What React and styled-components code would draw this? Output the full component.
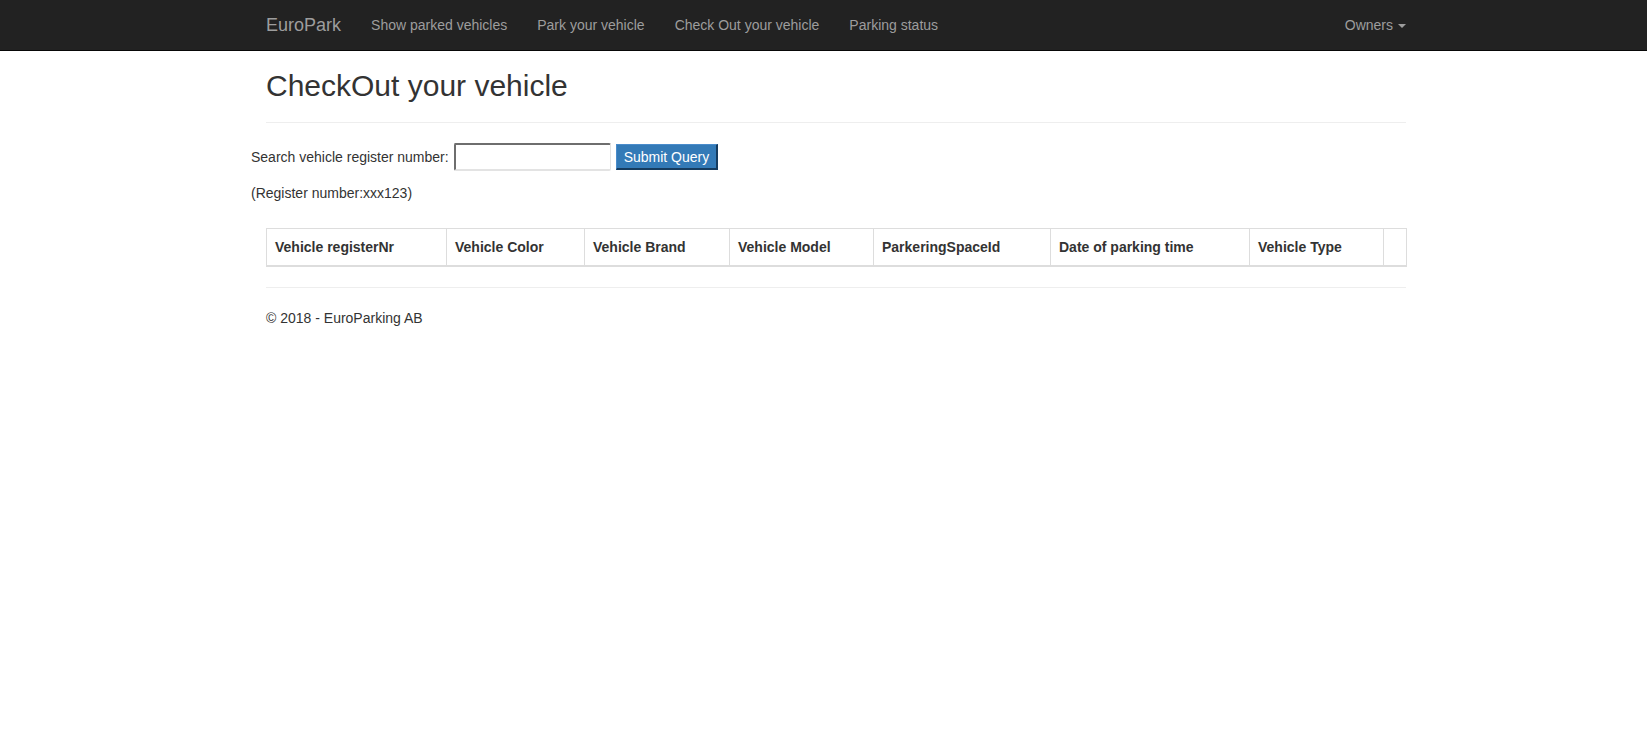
import React, { useState } from 'react';
import styled, { createGlobalStyle } from 'styled-components';

const GlobalStyle = createGlobalStyle`
  html, body {
    margin: 0;
    padding: 0;
    background: #fff;
  }
  body {
    font-family: "Liberation Sans", Arial, Helvetica, sans-serif;
    font-size: 14px;
    line-height: 20px;
    color: #333;
  }
  * {
    box-sizing: border-box;
  }
`;

const Navbar = styled.nav`
  height: 51px;
  background: #222;
  border-bottom: 1px solid #080808;
`;

const Container = styled.div`
  width: 1170px;
  margin-left: calc(50% - 572.5px);
  padding: 0 15px;
`;

const NavInner = styled(Container)`
  display: flex;
  align-items: center;
  height: 50px;
`;

const Brand = styled.a`
  margin-left: -15px;
  padding: 15px;
  font-size: 18px;
  line-height: 20px;
  color: #9d9d9d;
  text-decoration: none;
`;

const NavList = styled.ul`
  display: flex;
  list-style: none;
  margin: 0;
  padding: 0;
  margin-left: ${(p) => (p.$right ? 'auto' : '0')};
  margin-right: ${(p) => (p.$right ? '-15px' : '0')};
`;

const NavLink = styled.a`
  display: flex;
  align-items: center;
  padding: 15px;
  line-height: 20px;
  color: #9d9d9d;
  text-decoration: none;
  cursor: pointer;
`;

const Caret = styled.span`
  display: inline-block;
  width: 0;
  height: 0;
  margin-left: 5px;
  margin-top: 1px;
  border-top: 4px solid #9d9d9d;
  border-left: 4px solid transparent;
  border-right: 4px solid transparent;
`;

const Title = styled.h2`
  margin: 18px 0 0;
  font-size: 30px;
  line-height: 33px;
  font-weight: 500;
  color: #333;
`;

const Divider = styled.hr`
  margin: 20px 0;
  border: 0;
  border-top: 1px solid #eee;
  height: 0;
`;

const SearchForm = styled.form`
  display: flex;
  align-items: center;
  margin-left: -15px;
  height: 28px;
`;

const Label = styled.label`
  margin-right: 5px;
`;

const SearchInput = styled.input`
  width: 157px;
  height: 28px;
  border-style: solid;
  border-width: 2px 1px 2px 2px;
  border-color: #6e6e6e #e3e3e3 #e3e3e3 #6e6e6e;
  border-radius: 2px;
  font-family: inherit;
  font-size: 14px;
  padding: 2px 4px;
  outline: none;
`;

const SubmitButton = styled.button`
  margin-left: 5px;
  height: 26px;
  padding: 0 7px;
  background: #337ab7;
  color: #fff;
  font-family: inherit;
  font-size: 14px;
  border-style: solid;
  border-width: 1px 2px 2px 1px;
  border-color: #4a8ccb #153b5e #153b5e #4a8ccb;
  cursor: pointer;
`;

const Hint = styled.p`
  margin: 12px 0 0 -15px;
`;

const Table = styled.table`
  width: 100%;
  margin: 25px 0 20px;
  border-collapse: collapse;
  table-layout: fixed;
  border: 1px solid #ddd;
`;

const Th = styled.th`
  padding: 8px;
  text-align: left;
  font-weight: bold;
  line-height: 20px;
  border: 1px solid #ddd;
  border-bottom-width: 2px;
  white-space: nowrap;
`;

const Footer = styled.footer`
  p {
    margin: 0;
  }
`;

const columns = [
  { label: 'Vehicle registerNr', width: 180 },
  { label: 'Vehicle Color', width: 138 },
  { label: 'Vehicle Brand', width: 145 },
  { label: 'Vehicle Model', width: 144 },
  { label: 'ParkeringSpaceId', width: 177 },
  { label: 'Date of parking time', width: 199 },
  { label: 'Vehicle Type', width: 134 },
  { label: '', width: 23 },
];

const navItems = ['Show parked vehicles', 'Park your vehicle', 'Check Out your vehicle', 'Parking status'];

export default function App() {
  const [regNr, setRegNr] = useState('');

  return (
    <>
      <GlobalStyle />
      <Navbar>
        <NavInner>
          <Brand href="#">EuroPark</Brand>
          <NavList>
            {navItems.map((item) => (
              <li key={item}>
                <NavLink>{item}</NavLink>
              </li>
            ))}
          </NavList>
          <NavList $right>
            <li>
              <NavLink>
                Owners <Caret />
              </NavLink>
            </li>
          </NavList>
        </NavInner>
      </Navbar>

      <Container>
        <Title>CheckOut your vehicle</Title>
        <Divider />

        <SearchForm onSubmit={(e) => e.preventDefault()}>
          <Label>Search vehicle register number:</Label>
          <SearchInput value={regNr} onChange={(e) => setRegNr(e.target.value)} />
          <SubmitButton type="submit">Submit Query</SubmitButton>
        </SearchForm>
        <Hint>(Register number:xxx123)</Hint>

        <Table>
          <colgroup>
            {columns.map((c, i) => (
              <col key={i} style={{ width: c.width }} />
            ))}
          </colgroup>
          <thead>
            <tr>
              {columns.map((c, i) => (
                <Th key={i}>{c.label}</Th>
              ))}
            </tr>
          </thead>
          <tbody />
        </Table>

        <Divider />
        <Footer>
          <p>© 2018 - EuroParking AB</p>
        </Footer>
      </Container>
    </>
  );
}
